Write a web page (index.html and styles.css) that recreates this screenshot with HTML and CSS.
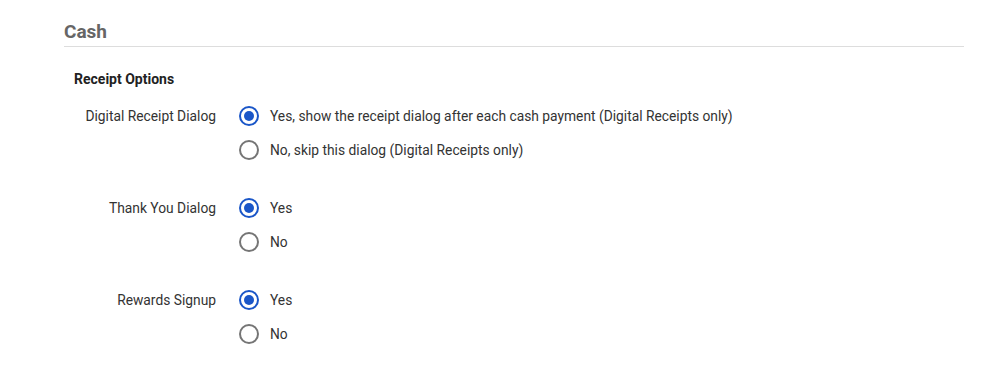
FILE: index.html
```html
<!DOCTYPE html>
<html lang="en">
<head>
    <meta charset="UTF-8">
    <title>Cash Settings</title>
    <link rel="stylesheet" href="styles.css">
</head>
<body>
<div class="page">
    <h2 class="section-title">Cash</h2>
    <h3 class="group-title">Receipt Options</h3>

    <div class="setting">
        <span class="setting-label">Digital Receipt Dialog</span>
        <div class="choices">
            <label class="choice">
                <input type="radio" name="digitalReceipt" value="yes" checked>
                <span class="dot"></span>
                Yes, show the receipt dialog after each cash payment (Digital Receipts only)
            </label>
            <label class="choice">
                <input type="radio" name="digitalReceipt" value="no">
                <span class="dot"></span>
                No, skip this dialog (Digital Receipts only)
            </label>
        </div>
    </div>

    <div class="setting">
        <span class="setting-label">Thank You Dialog</span>
        <div class="choices">
            <label class="choice">
                <input type="radio" name="thankYou" value="yes" checked>
                <span class="dot"></span>
                Yes
            </label>
            <label class="choice">
                <input type="radio" name="thankYou" value="no">
                <span class="dot"></span>
                No
            </label>
        </div>
    </div>

    <div class="setting">
        <span class="setting-label">Rewards Signup</span>
        <div class="choices">
            <label class="choice">
                <input type="radio" name="rewards" value="yes" checked>
                <span class="dot"></span>
                Yes
            </label>
            <label class="choice">
                <input type="radio" name="rewards" value="no">
                <span class="dot"></span>
                No
            </label>
        </div>
    </div>
</div>
</body>
</html>
```

FILE: styles.css
```css
body {
    font-family: Roboto, "Liberation Sans", sans-serif;
    font-size: 13.8px;
    color: #333;
    margin: 0;
    background: #fff;
}
.page {
    width: 900px;
    margin-left: 64px;
    padding-top: 20px;
}
.section-title {
    font-size: 19px;
    font-weight: bold;
    color: #666;
    margin: 0;
    line-height: 24px;
    padding-bottom: 2px;
    border-bottom: 1px solid #ddd;
}
.group-title {
    font-size: 14px;
    font-weight: bold;
    color: #222;
    margin: 22px 0 0 10px;
    line-height: 20px;
}
.setting {
    display: flex;
    align-items: flex-start;
    margin-top: 15px;
}
.setting + .setting {
    margin-top: 34px;
}
.setting-label {
    width: 152px;
    text-align: right;
    line-height: 24px;
    margin-right: 23px;
}
.choices {
    display: flex;
    flex-direction: column;
    gap: 10px;
}
.choice {
    display: flex;
    align-items: center;
    line-height: 24px;
    cursor: pointer;
}
.choice input {
    display: none;
}
.dot {
    width: 20px;
    height: 20px;
    box-sizing: border-box;
    border: 2px solid #757575;
    border-radius: 50%;
    margin-right: 11px;
    position: relative;
}
.choice input:checked + .dot {
    border-color: #1a56c8;
}
.choice input:checked + .dot::after {
    content: "";
    position: absolute;
    left: 3px;
    top: 3px;
    width: 10px;
    height: 10px;
    border-radius: 50%;
    background: #1a56c8;
}
```
